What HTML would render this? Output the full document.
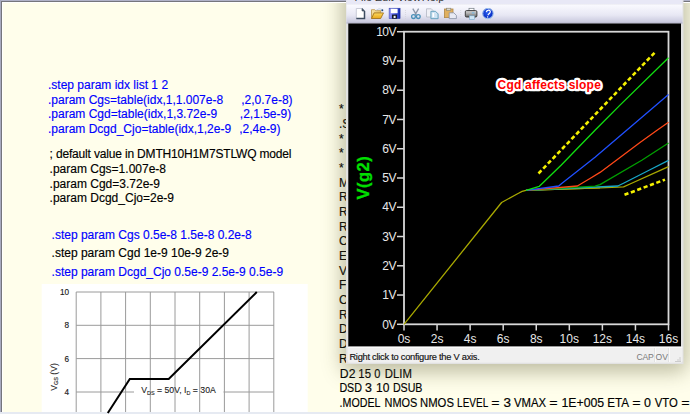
<!DOCTYPE html>
<html><head><meta charset="utf-8">
<style>
html,body{margin:0;padding:0;}
body{width:690px;height:414px;overflow:hidden;position:relative;background:#fffeeb;font-family:"Liberation Sans",sans-serif;}
.t{position:absolute;white-space:pre;font-size:12px;line-height:13px;}
.s{-webkit-text-stroke:0.15px currentColor;}
svg{position:absolute;left:0;top:0;}
</style></head><body>
<div class="t s" style="left:48px;top:79.00px;color:#0000ff;">.step param idx list 1 2</div>
<div class="t s" style="left:48px;top:94.00px;color:#0000ff;">.param Cgs=table(idx,1,1.007e-8</div>
<div class="t s" style="left:241.2px;top:94.00px;color:#0000ff;">,2,0.7e-8)</div>
<div class="t s" style="left:48px;top:108.00px;color:#0000ff;">.param Cgd=table(idx,1,3.72e-9</div>
<div class="t s" style="left:239.8px;top:108.00px;color:#0000ff;">,2,1.5e-9)</div>
<div class="t s" style="left:48px;top:123.00px;color:#0000ff;">.param Dcgd_Cjo=table(idx,1,2e-9</div>
<div class="t s" style="left:239.2px;top:123.00px;color:#0000ff;">,2,4e-9)</div>
<div class="t s" style="left:49.6px;top:148.00px;color:#000;letter-spacing:-0.17px;">; default value in DMTH10H1M7STLWQ model</div>
<div class="t s" style="left:49.6px;top:163.00px;color:#000;">.param Cgs=1.007e-8</div>
<div class="t s" style="left:49.6px;top:178.00px;color:#000;">.param Cgd=3.72e-9</div>
<div class="t s" style="left:49.6px;top:192.00px;color:#000;">.param Dcgd_Cjo=2e-9</div>
<div class="t s" style="left:51.6px;top:229.00px;color:#0000ff;">.step param Cgs 0.5e-8 1.5e-8 0.2e-8</div>
<div class="t s" style="left:51.6px;top:247.00px;color:#000;">.step param Cgd 1e-9 10e-9 2e-9</div>
<div class="t s" style="left:51.6px;top:266.00px;color:#0000ff;">.step param Dcgd_Cjo 0.5e-9 2.5e-9 0.5e-9</div>
<div class="t s" style="left:339px;top:103.00px;color:#000;">*</div>
<div class="t s" style="left:339px;top:118.00px;color:#000;">.S</div>
<div class="t s" style="left:339px;top:133.00px;color:#000;">*</div>
<div class="t s" style="left:339px;top:147.00px;color:#000;">*</div>
<div class="t s" style="left:339px;top:162.00px;color:#000;">*</div>
<div class="t s" style="left:339px;top:177.00px;color:#000;">M</div>
<div class="t s" style="left:339px;top:191.00px;color:#000;">R</div>
<div class="t s" style="left:339px;top:206.00px;color:#000;">R</div>
<div class="t s" style="left:339px;top:221.00px;color:#000;">R</div>
<div class="t s" style="left:339px;top:235.00px;color:#000;">C</div>
<div class="t s" style="left:339px;top:250.00px;color:#000;">E</div>
<div class="t s" style="left:339px;top:265.00px;color:#000;">V</div>
<div class="t s" style="left:339px;top:279.00px;color:#000;">F</div>
<div class="t s" style="left:339px;top:294.00px;color:#000;">C</div>
<div class="t s" style="left:339px;top:309.00px;color:#000;">R</div>
<div class="t s" style="left:339px;top:323.00px;color:#000;">D</div>
<div class="t s" style="left:339px;top:338.00px;color:#000;">D</div>
<div class="t s" style="left:339px;top:353.00px;color:#000;">R</div>
<div class="t s" style="left:339.63px;top:368.00px;color:#000;transform:scaleX(1.018);transform-origin:7.67px 50%;">D2</div>
<div class="t s" style="left:357.67px;top:368.00px;color:#000;transform:scaleX(0.947);transform-origin:6.68px 50%;">15</div>
<div class="t s" style="left:374.06px;top:368.00px;color:#000;transform:scaleX(0.914);transform-origin:3.34px 50%;">0</div>
<div class="t s" style="left:383.91px;top:368.00px;color:#000;transform:scaleX(0.943);transform-origin:14.34px 50%;">DLIM</div>
<div class="t s" style="left:338.18px;top:382.00px;color:#000;transform:scaleX(0.891);transform-origin:12.67px 50%;">DSD</div>
<div class="t s" style="left:365.21px;top:382.00px;color:#000;transform:scaleX(1.037);transform-origin:3.34px 50%;">3</div>
<div class="t s" style="left:376.22px;top:382.00px;color:#000;transform:scaleX(1.003);transform-origin:6.68px 50%;">10</div>
<div class="t s" style="left:391.38px;top:382.00px;color:#000;transform:scaleX(0.887);transform-origin:16.67px 50%;">DSUB</div>
<div class="t s" style="left:336.99px;top:397.00px;color:#000;transform:scaleX(0.889);transform-origin:23.01px 50%;">.MODEL</div>
<div class="t s" style="left:383.15px;top:397.00px;color:#000;transform:scaleX(0.911);transform-origin:18.00px 50%;">NMOS</div>
<div class="t s" style="left:418.85px;top:397.00px;color:#000;transform:scaleX(0.940);transform-origin:18.00px 50%;">NMOS</div>
<div class="t s" style="left:453.77px;top:397.00px;color:#000;transform:scaleX(0.833);transform-origin:18.68px 50%;">LEVEL</div>
<div class="t s" style="left:492.44px;top:397.00px;color:#000;transform:scaleX(1.180);transform-origin:3.51px 50%;">=</div>
<div class="t s" style="left:504.16px;top:397.00px;color:#000;transform:scaleX(1.125);transform-origin:3.34px 50%;">3</div>
<div class="t s" style="left:513.29px;top:397.00px;color:#000;transform:scaleX(0.945);transform-origin:17.01px 50%;">VMAX</div>
<div class="t s" style="left:549.89px;top:397.00px;color:#000;transform:scaleX(1.197);transform-origin:3.51px 50%;">=</div>
<div class="t s" style="left:562.19px;top:397.00px;color:#000;transform:scaleX(1.024);transform-origin:20.86px 50%;">1E+005</div>
<div class="t s" style="left:607.02px;top:397.00px;color:#000;transform:scaleX(0.974);transform-origin:11.23px 50%;">ETA</div>
<div class="t s" style="left:632.69px;top:397.00px;color:#000;transform:scaleX(1.197);transform-origin:3.51px 50%;">=</div>
<div class="t s" style="left:643.91px;top:397.00px;color:#000;transform:scaleX(1.037);transform-origin:3.34px 50%;">0</div>
<div class="t s" style="left:653.62px;top:397.00px;color:#000;transform:scaleX(0.942);transform-origin:12.23px 50%;">VTO</div>
<div class="t s" style="left:681.59px;top:397.00px;color:#000;transform:scaleX(1.197);transform-origin:3.51px 50%;">=</div>
<div style="position:absolute;left:346px;top:-20px;width:337px;height:383px;border-radius:4px;box-shadow:0 5px 20px 4px rgba(90,90,50,0.40);"></div>
<div style="position:absolute;left:0;top:0;width:690px;height:1px;background:#b0b2c8;"></div>
<div style="position:absolute;left:0;top:1px;width:690px;height:1px;background:#76767c;"></div>
<div style="position:absolute;left:2px;top:2px;width:688px;height:1px;background:#ffffff;"></div>
<div style="position:absolute;left:0;top:0;width:1px;height:414px;background:#a8aabf;"></div>
<div style="position:absolute;left:1px;top:1px;width:1px;height:412px;background:#76767c;"></div>
<div style="position:absolute;left:2px;top:2px;width:1px;height:410px;background:#ffffff;"></div>
<div style="position:absolute;left:0;top:412px;width:690px;height:2px;background:#e6eaf2;"></div>
<svg width="690" height="414">
<rect x="41.7" y="284" width="266" height="128" fill="#ffffff"/>
<line x1="76.20" y1="292" x2="76.20" y2="412" stroke="#9a9a9a" stroke-width="1"/>
<line x1="100.90" y1="292" x2="100.90" y2="412" stroke="#9a9a9a" stroke-width="1"/>
<line x1="125.60" y1="292" x2="125.60" y2="412" stroke="#9a9a9a" stroke-width="1"/>
<line x1="150.30" y1="292" x2="150.30" y2="412" stroke="#9a9a9a" stroke-width="1"/>
<line x1="175.00" y1="292" x2="175.00" y2="412" stroke="#9a9a9a" stroke-width="1"/>
<line x1="199.70" y1="292" x2="199.70" y2="412" stroke="#9a9a9a" stroke-width="1"/>
<line x1="224.40" y1="292" x2="224.40" y2="412" stroke="#9a9a9a" stroke-width="1"/>
<line x1="249.10" y1="292" x2="249.10" y2="412" stroke="#9a9a9a" stroke-width="1"/>
<line x1="273.80" y1="292" x2="273.80" y2="412" stroke="#9a9a9a" stroke-width="1"/>
<line x1="76.2" y1="292.0" x2="274" y2="292.0" stroke="#9a9a9a" stroke-width="1"/>
<text x="69" y="295.0" font-family="Liberation Sans" font-size="8.2" fill="#1a1a1a" stroke="#1a1a1a" stroke-width="0.15" text-anchor="end">10</text>
<line x1="76.2" y1="325.3" x2="274" y2="325.3" stroke="#9a9a9a" stroke-width="1"/>
<text x="69" y="328.3" font-family="Liberation Sans" font-size="8.2" fill="#1a1a1a" stroke="#1a1a1a" stroke-width="0.15" text-anchor="end">8</text>
<line x1="76.2" y1="358.6" x2="274" y2="358.6" stroke="#9a9a9a" stroke-width="1"/>
<text x="69" y="361.6" font-family="Liberation Sans" font-size="8.2" fill="#1a1a1a" stroke="#1a1a1a" stroke-width="0.15" text-anchor="end">6</text>
<line x1="76.2" y1="392.0" x2="134" y2="392.0" stroke="#9a9a9a" stroke-width="1"/>
<line x1="223.5" y1="392.0" x2="273.5" y2="392.0" stroke="#9a9a9a" stroke-width="1"/>
<text x="69" y="395.0" font-family="Liberation Sans" font-size="8.2" fill="#1a1a1a" stroke="#1a1a1a" stroke-width="0.15" text-anchor="end">4</text>
<polyline points="107.8,413 129.8,379 168.7,379 256.8,292" fill="none" stroke="#000" stroke-width="2"/>
<text x="141.2" y="393" font-family="Liberation Sans" font-size="8.7" fill="#222" stroke="#222" stroke-width="0.1">V<tspan font-size="5.5" dy="1.5">DS</tspan><tspan dy="-1.5"> = 50V, I</tspan><tspan font-size="5.5" dy="1.5">D</tspan><tspan dy="-1.5"> = 30A</tspan></text>
<text transform="translate(56.8,377) rotate(-90)" font-family="Liberation Sans" font-size="8.6" fill="#222" stroke="#222" stroke-width="0.12" text-anchor="middle">V<tspan font-size="5.5" dy="1.5">GS</tspan><tspan dy="-1.5"> (V)</tspan></text>
</svg>
<svg width="690" height="414">
<defs><linearGradient id="tb" x1="0" y1="0" x2="0" y2="1"><stop offset="0" stop-color="#fafaff"/><stop offset="0.55" stop-color="#e8e8f4"/><stop offset="1" stop-color="#c4c4da"/></linearGradient></defs>
<rect x="346" y="0" width="337.5" height="364" fill="#e2e2e2"/>
<rect x="346.5" y="0" width="336" height="4.5" fill="#e8e8f6"/>
<rect x="346.5" y="4.5" width="336" height="19" fill="url(#tb)"/>
<rect x="346.5" y="22.5" width="336" height="1" fill="#b8b8cc"/>
<rect x="348.3" y="23.5" width="332.7" height="323.2" fill="#000"/>
<rect x="347.5" y="346.7" width="335" height="16" rx="2" fill="#f0f0f0"/>
<rect x="347.5" y="346.7" width="335" height="1" fill="#ffffff"/>
<line x1="654.5" y1="348" x2="654.5" y2="362" stroke="#e2e2e2" stroke-width="1"/>
<line x1="655.5" y1="348" x2="655.5" y2="362" stroke="#fafafa" stroke-width="1"/>
<rect x="679.5" y="357.5" width="1" height="1" fill="#a8a8a8"/>
<rect x="677.5" y="359.5" width="1" height="1" fill="#a8a8a8"/>
<rect x="679.5" y="359.5" width="1" height="1" fill="#a8a8a8"/>
<rect x="675.5" y="361" width="1" height="1" fill="#a8a8a8"/>
<rect x="677.5" y="361" width="1" height="1" fill="#a8a8a8"/>
<rect x="679.5" y="361" width="1" height="1" fill="#a8a8a8"/>
<line x1="668.5" y1="348" x2="668.5" y2="362" stroke="#e2e2e2" stroke-width="1"/>
<line x1="669.5" y1="348" x2="669.5" y2="362" stroke="#fafafa" stroke-width="1"/>
</svg>
<div style="position:absolute;left:346px;top:0;width:336px;height:4px;overflow:hidden;"><div class="t" style="left:8.4px;top:-9px;color:#333;font-size:11px;">File</div><div class="t" style="left:28.7px;top:-9px;color:#333;font-size:11px;">Edit</div><div class="t" style="left:51.2px;top:-9px;color:#333;font-size:11px;">View</div><div class="t" style="left:75.8px;top:-9px;color:#333;font-size:11px;">Help</div></div>
<div class="t" style="left:349.4px;top:352.0px;color:#101010;font-size:9.3px;line-height:10px;letter-spacing:-0.26px;-webkit-text-stroke:0.15px #101010;">Right click to configure the V axis.</div>
<div class="t" style="left:636.6px;top:351.7px;color:#7a7a7a;font-size:8.6px;letter-spacing:-0.25px;line-height:10px;">CAP</div>
<div class="t" style="left:655.6px;top:351.7px;color:#7a7a7a;font-size:8.6px;line-height:10px;">OV</div>
<svg width="690" height="414">
<rect x="404.0" y="31.7" width="264.5" height="292.6" fill="none" stroke="#d8d8d8" stroke-width="1.8"/>
<line x1="397" y1="324.30" x2="404.0" y2="324.30" stroke="#d8d8d8" stroke-width="1.5"/>
<line x1="397" y1="295.04" x2="404.0" y2="295.04" stroke="#d8d8d8" stroke-width="1.5"/>
<line x1="397" y1="265.78" x2="404.0" y2="265.78" stroke="#d8d8d8" stroke-width="1.5"/>
<line x1="397" y1="236.52" x2="404.0" y2="236.52" stroke="#d8d8d8" stroke-width="1.5"/>
<line x1="397" y1="207.26" x2="404.0" y2="207.26" stroke="#d8d8d8" stroke-width="1.5"/>
<line x1="397" y1="178.00" x2="404.0" y2="178.00" stroke="#d8d8d8" stroke-width="1.5"/>
<line x1="397" y1="148.74" x2="404.0" y2="148.74" stroke="#d8d8d8" stroke-width="1.5"/>
<line x1="397" y1="119.48" x2="404.0" y2="119.48" stroke="#d8d8d8" stroke-width="1.5"/>
<line x1="397" y1="90.22" x2="404.0" y2="90.22" stroke="#d8d8d8" stroke-width="1.5"/>
<line x1="397" y1="60.96" x2="404.0" y2="60.96" stroke="#d8d8d8" stroke-width="1.5"/>
<line x1="397" y1="31.70" x2="404.0" y2="31.70" stroke="#d8d8d8" stroke-width="1.5"/>
<line x1="404.00" y1="324.3" x2="404.00" y2="330.5" stroke="#d8d8d8" stroke-width="1.5"/>
<line x1="437.06" y1="324.3" x2="437.06" y2="330.5" stroke="#d8d8d8" stroke-width="1.5"/>
<line x1="470.12" y1="324.3" x2="470.12" y2="330.5" stroke="#d8d8d8" stroke-width="1.5"/>
<line x1="503.19" y1="324.3" x2="503.19" y2="330.5" stroke="#d8d8d8" stroke-width="1.5"/>
<line x1="536.25" y1="324.3" x2="536.25" y2="330.5" stroke="#d8d8d8" stroke-width="1.5"/>
<line x1="569.31" y1="324.3" x2="569.31" y2="330.5" stroke="#d8d8d8" stroke-width="1.5"/>
<line x1="602.38" y1="324.3" x2="602.38" y2="330.5" stroke="#d8d8d8" stroke-width="1.5"/>
<line x1="635.44" y1="324.3" x2="635.44" y2="330.5" stroke="#d8d8d8" stroke-width="1.5"/>
<line x1="668.50" y1="324.3" x2="668.50" y2="330.5" stroke="#d8d8d8" stroke-width="1.5"/>
<path d="M404,324.3 L501.6,202.5 L518.5,193.2 Q522,190.9 526,190.3 L540,189.8 L600,187.8" fill="none" stroke="#a8a800" stroke-width="1.3" stroke-linejoin="round"/>
<polyline points="526.0,190.3 540.0,189.8 600.0,187.8 623.6,186.9 630.0,184.0 660.8,170.2 668.5,166.6" fill="none" stroke="#a8a800" stroke-width="1.3" stroke-linejoin="round"/>
<polyline points="526.0,190.3 617.8,186.0 624.0,183.0 649.5,170.0 668.5,160.3" fill="none" stroke="#18a8c8" stroke-width="1.3" stroke-linejoin="round"/>
<polyline points="526.0,190.3 595.0,186.2 600.0,184.6 642.2,160.0 668.5,143.0" fill="none" stroke="#00a000" stroke-width="1.3" stroke-linejoin="round"/>
<polyline points="526.0,190.3 577.4,186.0 582.0,183.2 590.0,178.5 600.0,172.4 616.7,160.0 640.0,142.6 657.4,130.0 668.5,122.2" fill="none" stroke="#ff4818" stroke-width="1.3" stroke-linejoin="round"/>
<polyline points="526.0,190.3 558.7,186.0 562.0,183.2 585.2,165.0 595.0,157.3 650.4,110.0 668.5,94.4" fill="none" stroke="#2050ff" stroke-width="1.3" stroke-linejoin="round"/>
<polyline points="526.0,190.3 539.3,186.3 542.5,183.3 561.3,165.0 595.0,130.3 620.0,105.1 668.5,57.7" fill="none" stroke="#10e010" stroke-width="1.3" stroke-linejoin="round"/>
<line x1="538.5" y1="173.5" x2="655" y2="52.3" stroke="#f4f000" stroke-width="2.6" stroke-dasharray="4.2 2.6"/>
<line x1="624.5" y1="194.8" x2="665" y2="179.6" stroke="#f4f000" stroke-width="2.6" stroke-dasharray="4.2 2.6"/>
</svg>
<div class="t" style="left:356px;width:40px;text-align:right;top:318.50px;color:#e8e8e8;letter-spacing:-0.5px;">0V</div>
<div class="t" style="left:356px;width:40px;text-align:right;top:289.24px;color:#e8e8e8;letter-spacing:-0.5px;">1V</div>
<div class="t" style="left:356px;width:40px;text-align:right;top:259.98px;color:#e8e8e8;letter-spacing:-0.5px;">2V</div>
<div class="t" style="left:356px;width:40px;text-align:right;top:230.72px;color:#e8e8e8;letter-spacing:-0.5px;">3V</div>
<div class="t" style="left:356px;width:40px;text-align:right;top:201.46px;color:#e8e8e8;letter-spacing:-0.5px;">4V</div>
<div class="t" style="left:356px;width:40px;text-align:right;top:172.20px;color:#e8e8e8;letter-spacing:-0.5px;">5V</div>
<div class="t" style="left:356px;width:40px;text-align:right;top:142.94px;color:#e8e8e8;letter-spacing:-0.5px;">6V</div>
<div class="t" style="left:356px;width:40px;text-align:right;top:113.68px;color:#e8e8e8;letter-spacing:-0.5px;">7V</div>
<div class="t" style="left:356px;width:40px;text-align:right;top:84.42px;color:#e8e8e8;letter-spacing:-0.5px;">8V</div>
<div class="t" style="left:356px;width:40px;text-align:right;top:55.16px;color:#e8e8e8;letter-spacing:-0.5px;">9V</div>
<div class="t" style="left:356px;width:40px;text-align:right;top:25.90px;color:#e8e8e8;letter-spacing:-0.5px;">10V</div>
<div class="t" style="left:384.00px;width:40px;text-align:center;top:332.60px;color:#e8e8e8;">0s</div>
<div class="t" style="left:417.06px;width:40px;text-align:center;top:332.60px;color:#e8e8e8;">2s</div>
<div class="t" style="left:450.12px;width:40px;text-align:center;top:332.60px;color:#e8e8e8;">4s</div>
<div class="t" style="left:483.19px;width:40px;text-align:center;top:332.60px;color:#e8e8e8;">6s</div>
<div class="t" style="left:516.25px;width:40px;text-align:center;top:332.60px;color:#e8e8e8;">8s</div>
<div class="t" style="left:549.31px;width:40px;text-align:center;top:332.60px;color:#e8e8e8;">10s</div>
<div class="t" style="left:582.38px;width:40px;text-align:center;top:332.60px;color:#e8e8e8;">12s</div>
<div class="t" style="left:615.44px;width:40px;text-align:center;top:332.60px;color:#e8e8e8;">14s</div>
<div class="t" style="left:648.50px;width:40px;text-align:center;top:332.60px;color:#e8e8e8;">16s</div>
<div class="t" style="left:342.8px;top:172.2px;width:40px;height:15px;line-height:15px;text-align:center;font-size:16.5px;-webkit-text-stroke:0.3px #00e000;font-weight:bold;color:#00e000;letter-spacing:0.5px;transform:rotate(-90deg);transform-origin:20px 7.5px;">V(g2)</div>
<svg width="690" height="414"><text x="497.6" y="89" font-family="Liberation Sans" font-weight="bold" font-size="12" letter-spacing="0.2" fill="#ffffff" stroke="#ffffff" stroke-width="4.6" stroke-linejoin="round">Cgd affects slope</text><text x="497.6" y="89" font-family="Liberation Sans" font-weight="bold" font-size="12" letter-spacing="0.2" fill="#ff0000">Cgd affects slope</text></svg>
<svg width="690" height="414">
<defs><linearGradient id="fold" x1="0" y1="0" x2="1" y2="1"><stop offset="0" stop-color="#f8e8b0"/><stop offset="1" stop-color="#e0b040"/></linearGradient><linearGradient id="fld2" x1="0" y1="0" x2="0" y2="1"><stop offset="0" stop-color="#fcd860"/><stop offset="1" stop-color="#e8a818"/></linearGradient><linearGradient id="flop" x1="0" y1="0" x2="1" y2="0"><stop offset="0" stop-color="#9a9af4"/><stop offset="0.5" stop-color="#5060e8"/><stop offset="1" stop-color="#1028b0"/></linearGradient><radialGradient id="help" cx="0.45" cy="0.4" r="0.6"><stop offset="0" stop-color="#2a60f0"/><stop offset="0.75" stop-color="#0a30c8"/><stop offset="1" stop-color="#8cb4e4"/></radialGradient><linearGradient id="prn" x1="0" y1="0" x2="0" y2="1"><stop offset="0" stop-color="#d8d8d8"/><stop offset="0.5" stop-color="#a8a8a8"/><stop offset="1" stop-color="#606060"/></linearGradient></defs>
<path d="M356.3,8.5 h5.8 l2.4,2.4 v7.6 h-8.2 z" fill="#ffffff" stroke="#c4c6d4" stroke-width="0.9"/>
<path d="M364.5,10.9 v7.6 h-8.2" fill="none" stroke="#3c4c60" stroke-width="1.5"/>
<path d="M362.1,8.5 l2.4,2.4 h-2.4 z" fill="#3c4c60" stroke="#3c4c60" stroke-width="0.8"/>
<path d="M371.5,18.5 v-8.8 h3.2 l1,1 h5 v2" fill="url(#fold)" stroke="#b89040" stroke-width="0.8"/>
<path d="M371.5,18.5 l2.6,-5.6 h9.4 l-2.8,5.6 z" fill="url(#fld2)" stroke="#9a6a10" stroke-width="0.8"/>
<path d="M376.5,10 q2.5,-2 5,-0.8" fill="none" stroke="#c0cce0" stroke-width="0.9"/>
<circle cx="382.3" cy="10.2" r="1" fill="#1e4a78"/>
<rect x="389.1" y="8.2" width="11" height="10.5" fill="url(#flop)"/>
<rect x="389.1" y="8.2" width="11" height="10.5" fill="none" stroke="#2838a0" stroke-width="0.5"/>
<rect x="390.8" y="8.8" width="6.8" height="4.4" fill="#ffffff"/>
<rect x="392" y="14.6" width="5" height="4.1" fill="#101828"/>
<rect x="393.6" y="15.8" width="2" height="2.2" fill="#f0f0f0"/>
<line x1="405.5" y1="10" x2="405.5" y2="20.5" stroke="#d4d4dc" stroke-width="0.8" stroke-dasharray="1 1"/>
<path d="M412.8,8.6 l3.6,6.2 M418.6,8.6 l-3.6,6.2" stroke="#8c96a8" stroke-width="1.3" fill="none"/>
<circle cx="413.5" cy="16.6" r="1.9" fill="none" stroke="#4a90b8" stroke-width="1.3"/>
<circle cx="418.3" cy="16.6" r="1.9" fill="none" stroke="#4a90b8" stroke-width="1.3"/>
<path d="M426.5,8.8 h4.8 l2.4,2.4 v5.8 h-7.2 z" fill="#f0f0f6" stroke="#b4b8c4" stroke-width="0.8"/>
<path d="M430.9,11.3 h4.6 l2.6,2.6 v4.8 h-7.2 z" fill="#cfe4f4" stroke="#5a9ab8" stroke-width="0.9"/>
<rect x="432.5" y="13" width="1.6" height="4" fill="#ffffff"/>
<rect x="444.4" y="9" width="8.6" height="8.6" fill="#e0b060" stroke="#b08848" stroke-width="0.8"/>
<rect x="446.6" y="8.2" width="4.2" height="2.2" fill="#d8d8d0" stroke="#8a8470" stroke-width="0.6"/>
<path d="M449.2,12.8 h4.6 l2.6,2.6 v3.2 h-7.2 z" fill="#e8eaf4" stroke="#8890a4" stroke-width="0.8"/>
<line x1="460.7" y1="10" x2="460.7" y2="20.5" stroke="#d4d4dc" stroke-width="0.8" stroke-dasharray="1 1"/>
<rect x="469" y="8.3" width="5" height="2.8" fill="#ffffff" stroke="#707880" stroke-width="0.7"/>
<rect x="465.3" y="10.6" width="11.6" height="6.4" rx="1.2" fill="url(#prn)" stroke="#303030" stroke-width="0.9"/>
<rect x="471.8" y="12.3" width="2.6" height="1.2" fill="#7ab8e0"/>
<rect x="469.3" y="15.8" width="5.2" height="3.8" fill="#cfe6f6" stroke="#78a8c8" stroke-width="0.6"/>
<circle cx="488" cy="13.6" r="5.5" fill="url(#help)"/>
<circle cx="488" cy="13.6" r="5.2" fill="none" stroke="#a8c8ec" stroke-width="0.9"/>
<path d="M486.3,12.2 q0.4,-2.3 2.4,-2.1 q1.9,0.3 1.5,2 q-0.4,1.3 -1.8,2.2 l-0.5,1" fill="none" stroke="#fff" stroke-width="1.2"/>
<circle cx="487.6" cy="16.9" r="0.7" fill="#fff"/>
</svg>
</body></html>
